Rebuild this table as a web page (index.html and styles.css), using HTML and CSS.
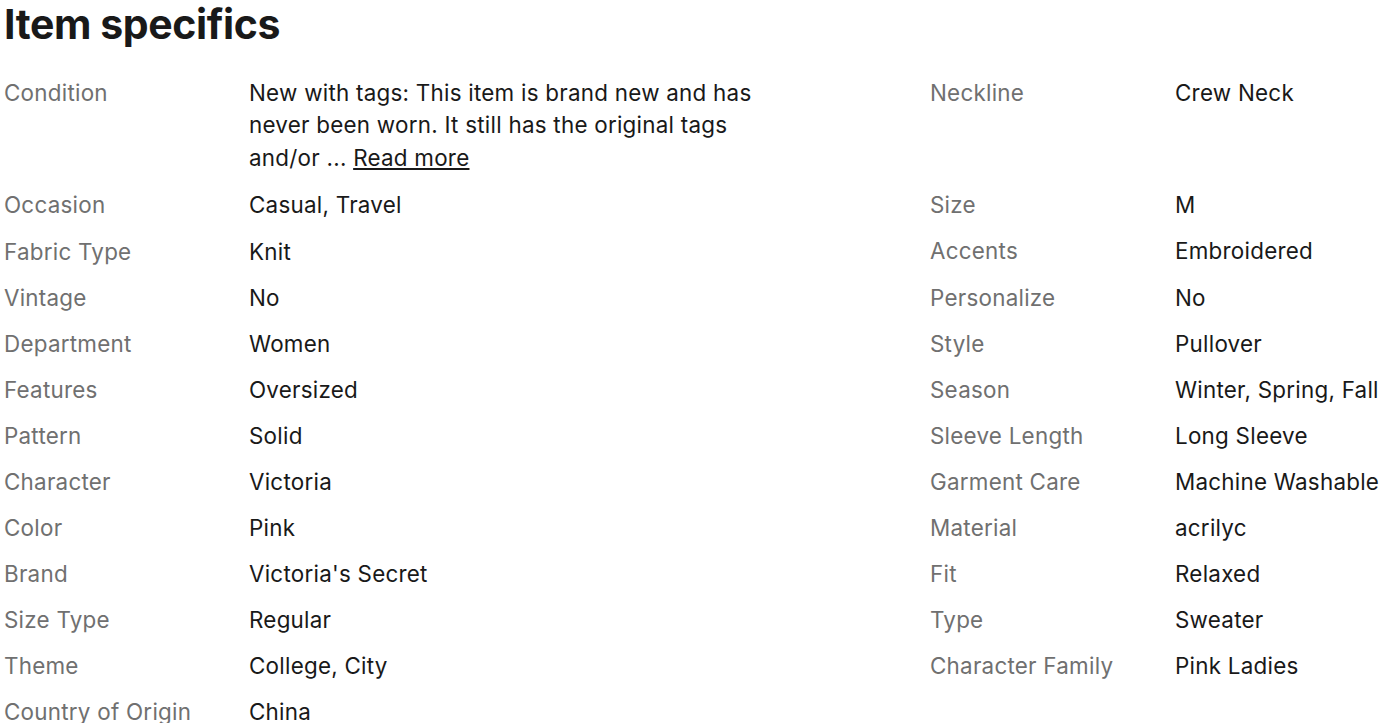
FILE: index.html
```html
<!DOCTYPE html>
<html lang="en">
<head>
    <meta charset="UTF-8">
    <meta name="viewport" content="width=device-width, initial-scale=1.0">
    <title>Item specifics</title>
    <link rel="stylesheet" href="styles.css">
</head>
<body>
    <h2 class="section-title">Item specifics</h2>

    <div class="specs">
        <div class="specs-col">
            <div class="spec-row first">
                <div class="spec-label">Condition</div>
                <div class="spec-value wrap">New with tags: This item is brand new and has never been worn. It still has the original tags and/or ... <a href="#" class="read-more">Read more</a></div>
            </div>
            <div class="spec-row"><div class="spec-label">Occasion</div><div class="spec-value">Casual, Travel</div></div>
            <div class="spec-row"><div class="spec-label">Fabric Type</div><div class="spec-value">Knit</div></div>
            <div class="spec-row"><div class="spec-label">Vintage</div><div class="spec-value">No</div></div>
            <div class="spec-row"><div class="spec-label">Department</div><div class="spec-value">Women</div></div>
            <div class="spec-row"><div class="spec-label">Features</div><div class="spec-value">Oversized</div></div>
            <div class="spec-row"><div class="spec-label">Pattern</div><div class="spec-value">Solid</div></div>
            <div class="spec-row"><div class="spec-label">Character</div><div class="spec-value">Victoria</div></div>
            <div class="spec-row"><div class="spec-label">Color</div><div class="spec-value">Pink</div></div>
            <div class="spec-row"><div class="spec-label">Brand</div><div class="spec-value">Victoria's Secret</div></div>
            <div class="spec-row"><div class="spec-label">Size Type</div><div class="spec-value">Regular</div></div>
            <div class="spec-row"><div class="spec-label">Theme</div><div class="spec-value">College, City</div></div>
            <div class="spec-row"><div class="spec-label">Country of Origin</div><div class="spec-value">China</div></div>
        </div>

        <div class="specs-col">
            <div class="spec-row first tall"><div class="spec-label">Neckline</div><div class="spec-value">Crew Neck</div></div>
            <div class="spec-row"><div class="spec-label">Size</div><div class="spec-value">M</div></div>
            <div class="spec-row"><div class="spec-label">Accents</div><div class="spec-value">Embroidered</div></div>
            <div class="spec-row"><div class="spec-label">Personalize</div><div class="spec-value">No</div></div>
            <div class="spec-row"><div class="spec-label">Style</div><div class="spec-value">Pullover</div></div>
            <div class="spec-row"><div class="spec-label">Season</div><div class="spec-value">Winter, Spring, Fall</div></div>
            <div class="spec-row"><div class="spec-label">Sleeve Length</div><div class="spec-value">Long Sleeve</div></div>
            <div class="spec-row"><div class="spec-label">Garment Care</div><div class="spec-value">Machine Washable</div></div>
            <div class="spec-row"><div class="spec-label">Material</div><div class="spec-value">acrilyc</div></div>
            <div class="spec-row"><div class="spec-label">Fit</div><div class="spec-value">Relaxed</div></div>
            <div class="spec-row"><div class="spec-label">Type</div><div class="spec-value">Sweater</div></div>
            <div class="spec-row"><div class="spec-label">Character Family</div><div class="spec-value">Pink Ladies</div></div>
        </div>
    </div>
</body>
</html>
```

FILE: styles.css
```css
body {
    margin: 0;
    padding: 0 0 0 4px;
    font-family: Inter, "Open Sans", Arial, sans-serif;
    background-color: #ffffff;
    color: #191919;
    overflow: hidden;
}
.section-title {
    margin: 0;
    font-size: 41px;
    font-weight: 700;
    line-height: 48px;
    letter-spacing: -0.4px;
}
.specs {
    display: flex;
    margin-top: 29px;
}
.specs-col {
    display: flex;
    flex-direction: column;
    gap: 13.7px;
}
.specs-col:first-child {
    width: 926px;
}
.spec-row {
    display: flex;
    font-size: 22.4px;
    line-height: 32.4px;
    letter-spacing: 0.25px;
}
.spec-row.first {
    margin-bottom: 1.5px;
}
.spec-row.tall {
    height: 97.2px;
}
.spec-label {
    width: 245px;
    flex-shrink: 0;
    color: #707070;
}
.spec-value {
    white-space: nowrap;
}
.spec-value.wrap {
    white-space: normal;
    width: 520px;
}
.read-more {
    color: #191919;
    text-decoration: underline;
    text-underline-offset: 2px;
}
```
